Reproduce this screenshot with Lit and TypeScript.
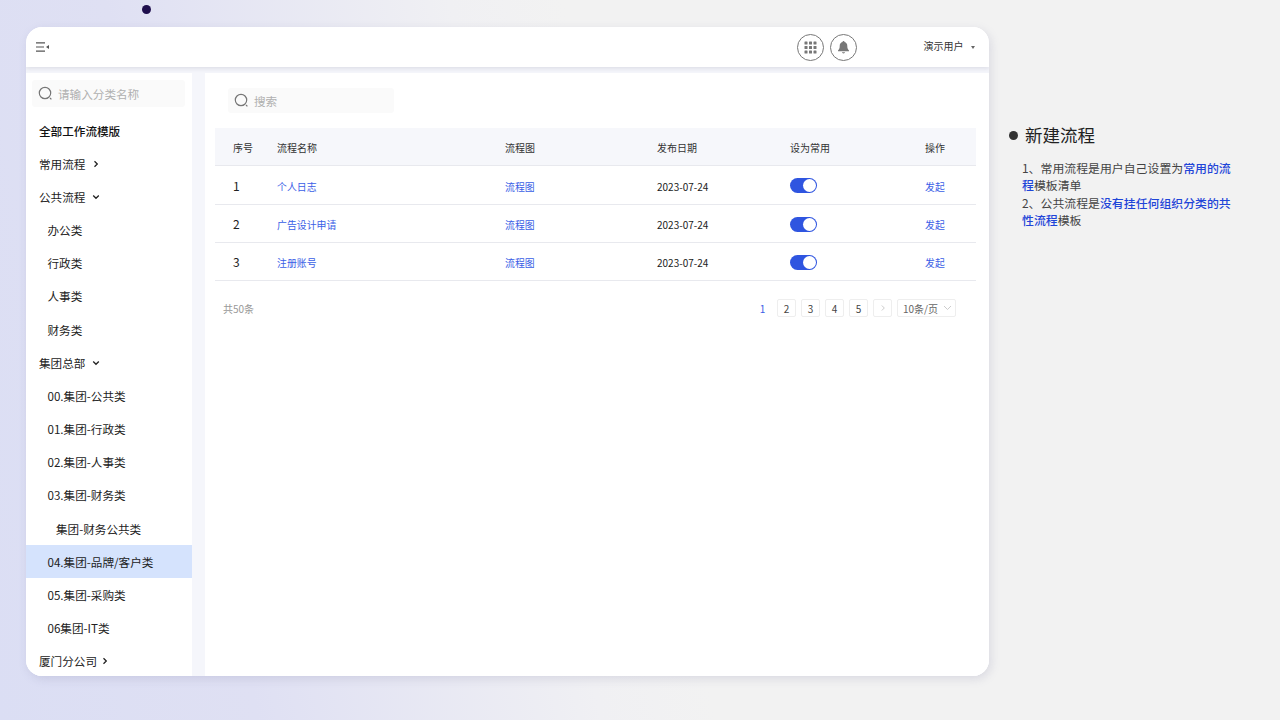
import { LitElement, html, css, svg } from "lit";
import { customElement } from "lit/decorators.js";

const chevR = svg`<svg class="chev" width="8" height="8" viewBox="0 0 8 8"><path d="M2.500 1.200 5.300 4 2.500 6.800" fill="none" stroke="#222" stroke-width="1.300"/></svg>`;
const chevD = svg`<svg class="chev" width="8" height="8" viewBox="0 0 8 8"><path d="M1.200 2.500 4 5.300 6.800 2.500" fill="none" stroke="#222" stroke-width="1.300"/></svg>`;
const searchIcon = svg`<svg width="15" height="15" viewBox="0 0 15 15"><circle cx="7" cy="7" r="5.700" fill="none" stroke="#777" stroke-width="1.200"/><path d="M12 12l1.400 1.400" stroke="#777" stroke-width="1.200"/></svg>`;

const tree: { t: string; lvl: number; chev?: string; active?: boolean; bold?: boolean; near?: boolean }[] = [
  { t: "全部工作流模版", lvl: 0, bold: true },
  { t: "常用流程", lvl: 0, chev: "r" },
  { t: "公共流程", lvl: 0, chev: "d" },
  { t: "办公类", lvl: 1 },
  { t: "行政类", lvl: 1 },
  { t: "人事类", lvl: 1 },
  { t: "财务类", lvl: 1 },
  { t: "集团总部", lvl: 0, chev: "d" },
  { t: "00.集团-公共类", lvl: 1 },
  { t: "01.集团-行政类", lvl: 1 },
  { t: "02.集团-人事类", lvl: 1 },
  { t: "03.集团-财务类", lvl: 1 },
  { t: "集团-财务公共类", lvl: 2 },
  { t: "04.集团-品牌/客户类", lvl: 1, active: true },
  { t: "05.集团-采购类", lvl: 1 },
  { t: "06集团-IT类", lvl: 1 },
  { t: "厦门分公司", lvl: 0, chev: "r", near: true },
];

const rows = [
  { n: "1", name: "个人日志" },
  { n: "2", name: "广告设计申请" },
  { n: "3", name: "注册账号" },
];

@customElement("app-root")
export class AppRoot extends LitElement {
  static styles = css`
    :host {
      display: flex;
      position: relative;
      width: 1280px;
      height: 720px;
      overflow: hidden;
      box-sizing: border-box;
      padding: 27px 0 0 26px;
      background: linear-gradient(78deg, #dbdef4 0%, #dfe0f3 18%, #f0f0f3 42%, #f2f2f2 50%, #f2f2f2 100%);
      font-family: "Noto Sans CJK SC", "Noto Sans", sans-serif;
      color: #222;
      font-size: 11px;
    }
    .dot {
      position: absolute;
      left: 142px;
      top: 5px;
      width: 9px;
      height: 9px;
      border-radius: 50%;
      background: #1f0f4d;
    }
    .shadowWrap {
      border-radius: 16px;
      box-shadow: 2px 3px 10px rgba(120, 120, 160, 0.2);
      height: 649px;
    }
    .card {
      width: 963px;
      height: 649px;
      flex: none;
      border-radius: 16px;
      background: #fff;
      overflow: hidden;
      display: flex;
      flex-direction: column;
    }
    .top {
      height: 40px;
      flex: none;
      display: flex;
      align-items: center;
      padding: 0 14px 0 10px;
      box-shadow: 0 2px 4px rgba(120, 120, 150, 0.18);
      position: relative;
      background: #fff;
    }
    .spacer { flex: 1; }
    .round {
      width: 25px;
      height: 25px;
      border: 1px solid #777;
      border-radius: 50%;
      display: flex;
      align-items: center;
      justify-content: center;
      margin-right: 6px;
    }
    .user { margin-left: 60.500px; font-size: 10px; line-height: 14px; color: #333; margin-top: -2px; }
    .caret {
      width: 0; height: 0; margin-left: 7.500px;
      border-left: 2.500px solid transparent;
      border-right: 2.500px solid transparent;
      border-top: 3px solid #666;
    }
    .body {
      flex: 1;
      min-height: 0;
      display: flex;
      background: #f5f6fb;
      padding-top: 6px;
    }
    .side {
      width: 166px;
      flex: none;
      background: #fff;
      overflow: hidden;
      padding-top: 7px;
    }
    .sideSearch {
      margin: 0 7px 7px 6px;
      height: 27px;
      border-radius: 3px;
      background: #fafafa;
      display: flex;
      align-items: center;
      gap: 5px;
      padding-left: 6px;
      color: #b0b0b0;
      font-size: 11.600px;
    }
    .item {
      height: 33.180px;
      display: flex;
      align-items: center;
      font-size: 11.600px;
      color: #222;
      white-space: nowrap;
      padding-left: 13px;
    }
    .item.l1 { padding-left: 21.500px; }
    .item.l2 { padding-left: 30px; }
    .item.active { background: #d5e3fd; }
    .item.bold { font-weight: 500; color: #111; }
    .chev { margin-left: 7px; }
    .item.near .chev { margin-left: 4px; }
    .main {
      flex: 1;
      margin-left: 13px;
      background: #fff;
      padding: 15px 13px 0 10px;
      min-width: 0;
    }
    .mainSearch {
      margin-left: 13px;
      width: 166px;
      height: 25px;
      background: #fafafa;
      border-radius: 3px;
      display: flex;
      align-items: center;
      gap: 4px;
      padding-left: 6px;
      box-sizing: border-box;
      color: #b0b0b0;
      font-size: 11.600px;
    }
    .mainSearch span { margin-left: 1px; }
    .grid {
      display: grid;
      grid-template-columns: 62px 228px 152px 133px 135px 51px;
      margin-top: 15px;
    }
    .grid > div {
      display: flex;
      align-items: center;
      border-bottom: 1px solid #e8e9ee;
      height: 38px;
      box-sizing: border-box;
    }
    .grid > .h {
      background: #f6f7fb;
      font-size: 10px;
      color: #333;
      padding-top: 2px;
    }
    .grid > .r1 { height: 39px; }
    .first { padding-left: 18px; }
    .num { font-size: 12px; padding-left: 18px; color: #222; }
    .link { color: #3a60e6; font-size: 9.900px; padding-top: 2px; }
    .grid > .link.r1 { padding-top: 3px; }
    .date { font-size: 10px; color: #222; padding-top: 2px; }
    .toggle {
      width: 27px;
      height: 15px;
      border-radius: 8px;
      background: #2f55e0;
      position: relative;
      margin-top: 1px;
    }
    .toggle::after {
      content: "";
      position: absolute;
      right: 1px;
      top: 1px;
      width: 13px;
      height: 13px;
      border-radius: 50%;
      background: #fff;
    }
    .pager {
      display: flex;
      align-items: center;
      height: 18px;
      margin-top: 18px;
      padding: 0 20px 0 8px;
      font-size: 10px;
      color: #999;
    }
    .pg {
      width: 19px;
      height: 18px;
      margin-left: 5px;
      border: 1px solid #eee;
      border-radius: 2px;
      box-sizing: border-box;
      display: flex;
      align-items: center;
      justify-content: center;
      color: #444;
      background: #fff;
    }
    .pg.cur { border-color: transparent; color: #3a60e6; }
    .size {
      width: 59px;
      height: 18px;
      margin-left: 5px;
      border: 1px solid #eee;
      border-radius: 2px;
      box-sizing: border-box;
      display: flex;
      align-items: center;
      padding-left: 5px;
      color: #666;
      gap: 5px;
    }
    .note {
      margin-left: 20px;
      width: 225px;
      padding-top: 95px;
      color: #333;
    }
    .noteTitle {
      display: flex;
      align-items: center;
      font-size: 17.500px;
      line-height: 26px;
      color: #222;
    }
    .bullet {
      width: 9px;
      height: 9px;
      border-radius: 50%;
      background: #333;
      margin-right: 7px;
    }
    .noteBody {
      margin: 11px 0 0 13px;
      width: 214px;
      font-size: 11.900px;
      line-height: 17.300px;
      color: #444;
    }
    b { color: #1f45d8; font-weight: 500; }
  `;

  render() {
    return html`
      <div class="dot"></div>
      <div class="shadowWrap"><div class="card">
        <div class="top">
          <svg width="13" height="10" viewBox="0 0 13 10"><path d="M0 .8h9M0 5h8M0 9.2h9" stroke="#555" stroke-width="1.200"/><path d="M13 3v4l-3-2z" fill="#555"/></svg>
          <div class="spacer"></div>
          <div class="round">
            <svg width="13" height="13" viewBox="0 0 13 13" fill="#777">
              ${[0.5, 5, 9.5].flatMap((y) => [0.5, 5, 9.5].map((x) => svg`<rect x=${x} y=${y} width="3" height="3" rx=".5"/>`))}
            </svg>
          </div>
          <div class="round">
            <svg width="13" height="14" viewBox="0 0 13 14" fill="#777"><path d="M6.500 1c.6 0 1 .4 1 .9 1.900.5 2.800 2 2.800 4 0 2 .4 3.300 1.700 4.600v.7H1v-.7c1.300-1.300 1.700-2.600 1.700-4.600s.9-3.500 2.800-4c0-.5.4-.9 1-.9z"/><path d="M5 12.300h3c0 .7-.6 1.200-1.500 1.200S5 13 5 12.300z"/></svg>
          </div>
          <div class="user">演示用户</div>
          <div class="caret"></div>
        </div>
        <div class="body">
          <div class="side">
            <div class="sideSearch">${searchIcon}<span>请输入分类名称</span></div>
            ${tree.map(
              (i) => html`<div class="item l${i.lvl} ${i.active ? "active" : ""} ${i.bold ? "bold" : ""} ${i.near ? "near" : ""}">
                ${i.t}${i.chev === "r" ? chevR : i.chev === "d" ? chevD : ""}
              </div>`
            )}
          </div>
          <div class="main">
            <div class="mainSearch">${searchIcon}<span>搜索</span></div>
            <div class="grid">
              <div class="h first">序号</div><div class="h">流程名称</div><div class="h">流程图</div>
              <div class="h">发布日期</div><div class="h">设为常用</div><div class="h">操作</div>
              ${rows.map((r, idx) => {
                const c = idx === 0 ? "r1" : "";
                return html`
                  <div class="num ${c}">${r.n}</div>
                  <div class="link ${c}">${r.name}</div>
                  <div class="link ${c}">流程图</div>
                  <div class="date ${c}">2023-07-24</div>
                  <div class="${c}"><span class="toggle"></span></div>
                  <div class="link ${c}">发起</div>
                `;
              })}
            </div>
            <div class="pager">
              <span>共50条</span>
              <div class="spacer"></div>
              <div class="pg cur">1</div>
              <div class="pg">2</div><div class="pg">3</div><div class="pg">4</div><div class="pg">5</div>
              <div class="pg"><svg width="8" height="8" viewBox="0 0 8 8"><path d="M2.800 1.500 5.300 4 2.800 6.500" fill="none" stroke="#ccc"/></svg></div>
              <div class="size"><span>10条/页</span><svg width="9" height="6" viewBox="0 0 9 6"><path d="M1 1l3.500 3.500L8 1" fill="none" stroke="#ccc"/></svg></div>
            </div>
          </div>
        </div>
      </div></div>
      <div class="note">
        <div class="noteTitle"><span class="bullet"></span>新建流程</div>
        <div class="noteBody">
          <div>1、常用流程是用户自己设置为<b>常用的流程</b>模板清单</div>
          <div>2、公共流程是<b>没有挂任何组织分类的共性流程</b>模板</div>
        </div>
      </div>
    `;
  }
}
